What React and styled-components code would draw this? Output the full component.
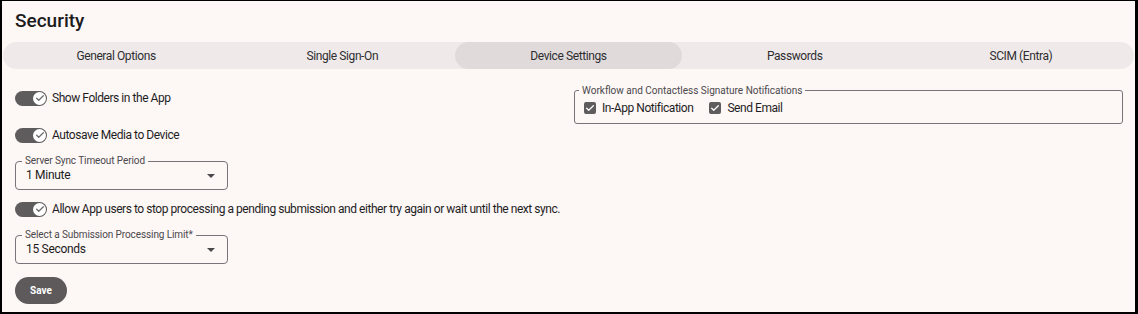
import React from "react";
import styled, { createGlobalStyle } from "styled-components";

const GlobalStyle = createGlobalStyle`
  html, body {
    margin: 0;
    padding: 0;
    background: #000;
  }
  body {
    font-family: Roboto, "Liberation Sans", sans-serif;
  }
`;

const tabs = [
  "General Options",
  "Single Sign-On",
  "Device Settings",
  "Passwords",
  "SCIM (Entra)",
];

const Check = ({ color }) => (
  <svg width="10" height="10" viewBox="0 0 24 24">
    <path
      d="M4 12.5l5 5L20 6.5"
      fill="none"
      stroke={color}
      strokeWidth="3"
      strokeLinecap="round"
      strokeLinejoin="round"
    />
  </svg>
);

const Toggle = ({ label }) => (
  <ToggleRow>
    <Track>
      <Thumb>
        <Check color="#6b6b6b" />
      </Thumb>
    </Track>
    <ToggleLabel>{label}</ToggleLabel>
  </ToggleRow>
);

const Select = ({ label, value, top }) => (
  <SelectBox $top={top}>
    <SelectLegend>{label}</SelectLegend>
    <SelectValue>{value}</SelectValue>
    <Caret />
  </SelectBox>
);

const CheckItem = ({ label }) => (
  <CheckRow>
    <Box>
      <Check color="#fff" />
    </Box>
    <span>{label}</span>
  </CheckRow>
);

const App = () => {
  return (
    <>
      <GlobalStyle />
      <Frame>
        <Title>Security</Title>
        <TabBar>
          {tabs.map((t) => (
            <Tab key={t} $active={t === "Device Settings"}>
              {t}
            </Tab>
          ))}
        </TabBar>
        <Columns>
          <LeftCol>
            <Toggle label="Show Folders in the App" />
            <Spacer $h={17} />
            <Toggle label="Autosave Media to Device" />
            <Select
              top={16}
              label="Server Sync Timeout Period"
              value="1 Minute"
            />
            <Spacer $h={9} />
            <Toggle label="Allow App users to stop processing a pending submission and either try again or wait until the next sync." />
            <Select
              top={16}
              label="Select a Submission Processing Limit*"
              value="15 Seconds"
            />
            <SaveButton>Save</SaveButton>
          </LeftCol>
          <RightCol>
            <Fieldset>
              <Legend>Workflow and Contactless Signature Notifications</Legend>
              <CheckGroup>
                <CheckItem label="In-App Notification" />
                <CheckItem label="Send Email" />
              </CheckGroup>
            </Fieldset>
          </RightCol>
        </Columns>
      </Frame>
    </>
  );
};

const Frame = styled.div`
  width: 1138px;
  height: 314px;
  box-sizing: border-box;
  border-style: solid;
  border-color: #000;
  border-width: 1px 3px 2px 2px;
  background: #fdf7f6;
  padding: 0 1px;
  overflow: hidden;
`;

const Title = styled.h1`
  margin: 0;
  padding: 8px 0 0 12px;
  height: 33px;
  box-sizing: border-box;
  font-size: 19px;
  font-weight: 500;
  color: #1c1b1c;
`;

const TabBar = styled.div`
  display: grid;
  grid-template-columns: repeat(5, 1fr);
  height: 27px;
  margin-top: 8px;
  border-radius: 14px;
  background: #efe9ea;
`;

const Tab = styled.div`
  display: flex;
  align-items: center;
  justify-content: center;
  font-size: 12px;
  letter-spacing: -0.4px;
  color: #2e2e30;
  border-radius: 14px;
  background: ${(p) => (p.$active ? "#e0dadb" : "transparent")};
`;

const Columns = styled.div`
  display: grid;
  grid-template-columns: 549px 549px;
  gap: 10px;
  padding: 0 0 0 12px;
`;

const LeftCol = styled.div`
  display: flex;
  flex-direction: column;
  align-items: flex-start;
  padding-top: 19px;
  white-space: nowrap;
`;

const RightCol = styled.div`
  padding-top: 16px;
`;

const Spacer = styled.div`
  height: ${(p) => p.$h}px;
`;

const ToggleRow = styled.div`
  display: flex;
  align-items: center;
  height: 20px;
  gap: 5px;
`;

const Track = styled.div`
  flex: none;
  width: 32px;
  height: 15px;
  border-radius: 8px;
  background: #5e5c5d;
  display: flex;
  align-items: center;
  justify-content: flex-end;
  padding-right: 1px;
  box-sizing: border-box;
`;

const Thumb = styled.div`
  width: 13px;
  height: 13px;
  border-radius: 50%;
  background: #fff;
  display: flex;
  align-items: center;
  justify-content: center;
`;

const ToggleLabel = styled.span`
  font-size: 12px;
  letter-spacing: -0.45px;
  color: #1f1e1f;
`;

const SelectBox = styled.div`
  position: relative;
  width: 213px;
  height: 29px;
  box-sizing: border-box;
  margin-top: ${(p) => p.$top}px;
  border: 1px solid #77747a;
  border-radius: 4px;
  padding: 6px 0 0 10px;
`;

const SelectLegend = styled.span`
  position: absolute;
  top: -6px;
  left: 6px;
  padding: 0 3px;
  background: #fdf7f6;
  font-size: 10px;
  line-height: 10px;
  letter-spacing: -0.1px;
  color: #4a484b;
`;

const SelectValue = styled.div`
  font-size: 12px;
  letter-spacing: -0.3px;
  color: #1c1b1c;
`;

const Caret = styled.span`
  position: absolute;
  right: 12px;
  top: 12px;
  width: 0;
  height: 0;
  border-left: 4px solid transparent;
  border-right: 4px solid transparent;
  border-top: 4px solid #4a484b;
`;

const SaveButton = styled.button`
  margin-top: 13px;
  width: 52px;
  height: 27px;
  border: none;
  border-radius: 14px;
  background: #5e5a5b;
  color: #fff;
  font-family: Roboto, "Liberation Sans", sans-serif;
  font-size: 10px;
  font-weight: 700;
  padding: 0;
`;

const Fieldset = styled.fieldset`
  margin: 0;
  height: 39px;
  box-sizing: border-box;
  border: 1px solid #77747a;
  border-radius: 3px;
  padding: 0 10px 0 9px;
`;

const Legend = styled.legend`
  font-size: 10px;
  color: #4a484b;
  padding: 0 3px;
  margin-left: -5px;
`;

const CheckGroup = styled.div`
  display: flex;
  gap: 16px;
  margin-top: 5px;
`;

const CheckRow = styled.label`
  display: flex;
  align-items: center;
  gap: 6px;
  font-size: 12px;
  letter-spacing: -0.45px;
  color: #1f1e1f;
`;

const Box = styled.span`
  width: 12px;
  height: 12px;
  border-radius: 2px;
  background: #5e5c5d;
  display: flex;
  align-items: center;
  justify-content: center;
`;

export default App;
